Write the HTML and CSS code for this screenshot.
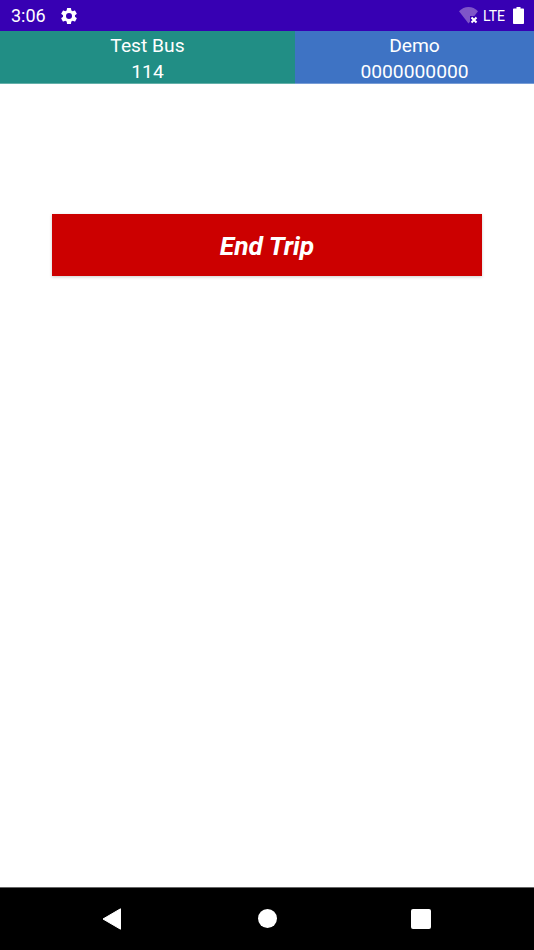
FILE: index.html
```html
<!DOCTYPE html>
<html lang="en">
<head>
    <meta charset="UTF-8">
    <title>End Trip</title>
    <link rel="stylesheet" href="styles.css">
</head>
<body>
    <div class="screen">
        <div class="status-bar">
            <span class="clock">3:06</span>
            <svg class="gear" viewBox="0 0 24 24"><path fill="#fff" d="M19.14 12.94c.04-.3.06-.61.06-.94s-.02-.64-.07-.94l2.03-1.58a.49.49 0 0 0 .12-.61l-1.92-3.32a.49.49 0 0 0-.59-.22l-2.39.96c-.5-.38-1.03-.7-1.62-.94l-.36-2.54a.48.48 0 0 0-.48-.41h-3.84a.48.48 0 0 0-.47.41l-.36 2.54c-.59.24-1.13.57-1.62.94l-2.39-.96a.48.48 0 0 0-.59.22L2.74 8.87a.47.47 0 0 0 .12.61l2.03 1.58c-.05.3-.09.63-.09.94s.02.64.07.94l-2.03 1.58a.49.49 0 0 0-.12.61l1.92 3.32c.12.22.37.29.59.22l2.39-.96c.5.38 1.03.7 1.62.94l.36 2.54c.05.24.24.41.48.41h3.84c.24 0 .44-.17.47-.41l.36-2.54c.59-.24 1.13-.56 1.62-.94l2.39.96c.22.08.47 0 .59-.22l1.92-3.32a.47.47 0 0 0-.12-.61l-2.01-1.58zM12 15.6A3.6 3.6 0 1 1 12 8.4a3.6 3.6 0 0 1 0 7.2z"/></svg>
            <div class="status-right">
                <svg class="wifi" viewBox="0 0 20 17">
                    <path fill="#7f55c8" d="M0 4.2C2.6 1.6 6 0 9.5 0S16.4 1.6 19 4.2L9.5 16.5z"/>
                    <path fill="#3700b3" d="M11 9h9v8h-9z"/>
                    <path stroke="#fff" stroke-width="2" d="M12.5 10.5l5 5M17.5 10.5l-5 5"/>
                </svg>
                <span class="lte">LTE</span>
                <svg class="battery" viewBox="0 0 11 17"><path fill="#fff" d="M3.5 0h4v1.5h2.7c.5 0 .8.4.8.8v13.9c0 .5-.4.8-.8.8H.8c-.5 0-.8-.4-.8-.8V2.3c0-.5.4-.8.8-.8h2.7z"/></svg>
            </div>
        </div>
        <div class="info-bar">
            <div class="info bus">
                <span>Test Bus</span>
                <span>114</span>
            </div>
            <div class="info driver">
                <span>Demo</span>
                <span>0000000000</span>
            </div>
        </div>
        <div class="content">
            <button class="end-trip">End Trip</button>
        </div>
        <div class="nav-bar">
            <svg class="nav-icon" viewBox="0 0 20 22"><path fill="#fff" stroke="#fff" stroke-width="1" stroke-linejoin="round" d="M1 11L18.5 .8v20.4z"/></svg>
            <span class="home"></span>
            <span class="recents"></span>
        </div>
    </div>
</body>
</html>
```

FILE: styles.css
```css
html, body {
    margin: 0;
    height: 100%;
}
body {
    font-family: Roboto, "Liberation Sans", sans-serif;
    color: white;
}

.screen {
    display: flex;
    flex-direction: column;
    height: 950px;
    background: white;
}

/* status bar */
.status-bar {
    display: flex;
    align-items: center;
    flex: none;
    height: 31px;
    padding: 0 10px 0 11px;
    background: #3700b3;
}
.clock {
    font-size: 18px;
}
.gear {
    width: 20px;
    height: 20px;
    margin-left: 13px;
}
.status-right {
    display: flex;
    align-items: center;
    margin-left: auto;
}
.wifi {
    width: 20px;
    height: 17px;
}
.lte {
    margin-left: 4px;
    font-size: 14px;
}
.battery {
    width: 11px;
    height: 17px;
    margin-left: 8px;
}

/* header */
.info-bar {
    display: flex;
    flex: none;
    height: 53px;
}
.info {
    display: flex;
    flex-direction: column;
    align-items: center;
    justify-content: center;
    box-sizing: border-box;
    padding-top: 3px;
    border-bottom: 1px solid rgba(255,255,255,.3);
    font-size: 19.25px;
    line-height: 26px;
}
.bus {
    width: 295px;
    background: #218e85;
}
.driver {
    flex: 1;
    background: #3e73c4;
}

/* main */
.content {
    flex: 1;
    padding: 130px 52px 0;
}
.end-trip {
    display: block;
    width: 100%;
    height: 62px;
    padding: 2px 0 0;
    border: 0;
    background: #cc0000;
    box-shadow: 0 1px 3px rgba(0,0,0,.2);
    color: white;
    font-family: inherit;
    font-size: 26.4px;
    font-style: italic;
    font-weight: bold;
}

/* nav bar */
.nav-bar {
    display: flex;
    align-items: center;
    flex: none;
    height: 63px;
    padding: 0 0 1px 102px;
    border-top: 1px solid #666;
    box-sizing: border-box;
    background: black;
}
.nav-icon {
    width: 20px;
    height: 22px;
}
.home {
    width: 19px;
    height: 19px;
    margin-left: 135.5px;
    border-radius: 50%;
    background: white;
}
.recents {
    width: 20px;
    height: 20px;
    margin-left: 134.5px;
    border-radius: 2px;
    background: white;
}
```
